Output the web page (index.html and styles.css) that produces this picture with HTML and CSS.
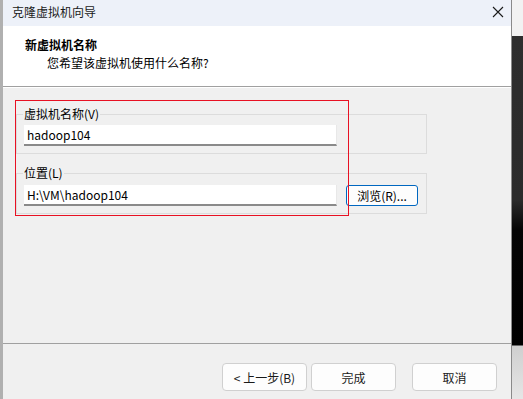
FILE: index.html
```html
<!DOCTYPE html>
<html lang="zh-CN">
  <head>
    <meta charset="UTF-8" />
    <title>克隆虚拟机向导</title>
    <link rel="stylesheet" href="styles.css">
  </head>
  <body>
    <div class="screen">
      <div class="window">
        <div class="titlebar">
          <span class="title">克隆虚拟机向导</span>
          <svg class="close" width="12" height="12" viewBox="0 0 12 12">
            <path d="M1 1 L11 11 M11 1 L1 11" stroke="#1a1a1a" stroke-width="1.1" fill="none" />
          </svg>
        </div>

        <div class="header">
          <div class="heading">新虚拟机名称</div>
          <div class="subtitle">您希望该虚拟机使用什么名称?</div>
        </div>

        <div class="content">
          <fieldset class="group">
            <legend>虚拟机名称(V)</legend>
            <div class="field">hadoop104</div>
          </fieldset>

          <fieldset class="group group-location">
            <legend>位置(L)</legend>
            <div class="row">
              <div class="field">H:\VM\hadoop104</div>
              <button class="browse">浏览(R)...</button>
            </div>
          </fieldset>

          <div class="highlight"></div>
        </div>

        <div class="footer">
          <button class="btn">&lt; 上一步(B)</button>
          <button class="btn">完成</button>
          <button class="btn btn-cancel">取消</button>
        </div>
      </div>
      <div class="side"></div>
    </div>
  </body>
</html>
```

FILE: styles.css
```css
* {
  box-sizing: border-box;
}
body {
  margin: 0;
  font-family: "Noto Sans CJK SC", "Noto Sans", sans-serif;
  font-size: 12px;
  color: #000;
  background-color: #2b2b2b;
}
.screen {
  display: flex;
  width: 523px;
  height: 399px;
  overflow: hidden;
}
.window {
  width: 511px;
  height: 399px;
  border-left: 3px solid #b0b0b0;
  background-color: #f0f0f0;
  display: flex;
  flex-direction: column;
}
.side {
  flex: 1;
  border-left: 1px solid #8a8a8a;
  background: linear-gradient(
    to bottom,
    #f2f2f2 0,
    #f2f2f2 36px,
    #2e2e2e 36px,
    #2b2b2b 200px,
    #050505 230px,
    #000 345px,
    #cfcfcf 346px,
    #e6e6e6 399px
  );
}
.titlebar {
  height: 26px;
  flex-shrink: 0;
  background-color: #edf1f9;
  display: flex;
  align-items: center;
  justify-content: space-between;
  padding: 0 7px 2px 9px;
}
.title {
  line-height: 16px;
  color: #1a1a1a;
}
.header {
  height: 61px;
  flex-shrink: 0;
  background-color: #fff;
  padding: 10px 0 0 22px;
  border-bottom: 1px solid #a0a0a0;
}
.heading {
  font-weight: bold;
  line-height: 18px;
}
.subtitle {
  line-height: 18px;
  padding-left: 22px;
}
.content {
  flex: 1;
  position: relative;
  padding: 18px 0 0 13px;
  border-top: 1px solid #fff;
}
.group {
  width: 411px;
  margin: 0;
  padding: 0 0 7px 7px;
  border: 1px solid #dcdcdc;
}
.group legend {
  padding: 0 1px;
  margin-left: -1px;
  line-height: 16px;
}
.group-location {
  margin-top: 11px;
}
.field {
  width: 313px;
  height: 21px;
  margin-top: 3px;
  padding-left: 3px;
  line-height: 19px;
  background-color: #fff;
  border-bottom: 2px solid #8a8a8a;
  border-right: 1px solid #e8e8e8;
  color: #000;
}
.group-location .field {
  margin-top: 4px;
}
.row {
  display: flex;
  align-items: flex-end;
  gap: 9px;
}
.browse {
  width: 72px;
  height: 21px;
  padding: 0;
  font-family: inherit;
  font-size: 12px;
  color: #000;
  background-color: #fdfdfd;
  border: 1px solid #0067c0;
  border-radius: 3px;
}
.highlight {
  position: absolute;
  left: 12px;
  top: 12px;
  width: 334px;
  height: 116px;
  border: 1px solid #e81123;
  pointer-events: none;
}
.footer {
  height: 56px;
  flex-shrink: 0;
  border-top: 1px solid #a0a0a0;
  display: flex;
  justify-content: flex-end;
  align-items: flex-start;
  padding: 19px 14px 0 0;
  gap: 4px;
}
.btn {
  width: 85px;
  height: 28px;
  padding: 0;
  font-family: inherit;
  font-size: 12px;
  color: #1a1a1a;
  background-color: #fdfdfd;
  border: 1px solid #d0d0d0;
  border-radius: 4px;
}
.btn-cancel {
  margin-left: 12px;
}
```
